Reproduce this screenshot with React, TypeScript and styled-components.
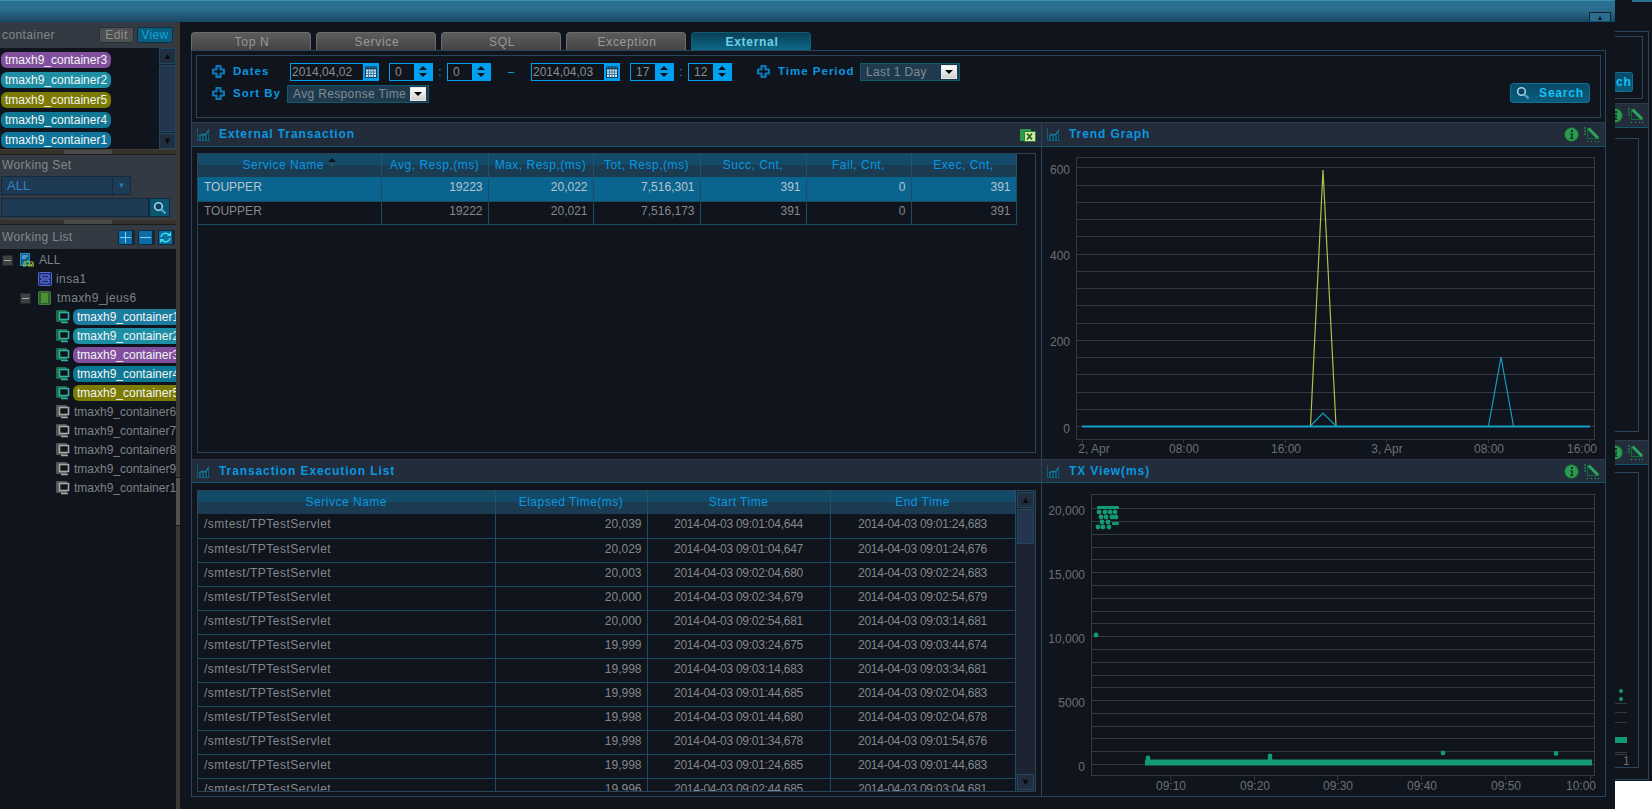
import React from 'react';
import styled, { createGlobalStyle } from 'styled-components';

const GlobalStyle = createGlobalStyle`
    html, body {
        margin: 0;
        padding: 0;
        background: #ffffff;
        overflow: hidden;
    }
    * {
        box-sizing: border-box;
    }
    body, table, input {
        font-family: "Liberation Sans", Arial, sans-serif;
        font-size: 12px;
    }
`

const DARK = '#0f141d';
const LINE = '#2a4559';
const BLUE = '#0a97e0';
const GREY = '#85888b';
const HEAD = '#333a43';

const Page = styled.div`
    display: flex;
    align-items: flex-start;
    width: 1652px;
    height: 809px;
`
const Window = styled.div`
    display: flex;
    flex-direction: column;
    width: 1615px;
    height: 809px;
    background: ${DARK};
`
const TopBar = styled.div`
    display: flex;
    justify-content: flex-end;
    align-items: flex-end;
    flex: 0 0 22px;
    padding-right: 4px;
    background: linear-gradient(#2a6f90 0%, #2b6d8d 45%, #1c4a66 100%);
    border-top: 1px solid #3f8fb3;
    border-bottom: 1px solid #124a68;
`
const CollapseButton = styled.div`
    display: flex;
    justify-content: center;
    align-items: center;
    width: 22px;
    height: 9px;
    background: #2a6d8c;
    border: 1px solid #10222f;
    border-bottom: none;
    color: #0a1016;
    font-size: 7px;
    line-height: 1;
`
const WindowBody = styled.div`
    display: flex;
    flex: 1;
    min-height: 0;
`
const Sidebar = styled.div`
    display: flex;
    flex-direction: column;
    flex: 0 0 176px;
    overflow: hidden;
`
const SideHead = styled.div`
    display: flex;
    align-items: center;
    justify-content: space-between;
    flex: 0 0 ${p => p.$height}px;
    padding: 0 3px 0 2px;
    background: ${HEAD};
    color: ${GREY};
    font-size: 12px;
    letter-spacing: 0.4px;
`
const ModeButtons = styled.div`
    display: flex;
    gap: 3px;
`
const ModeButton = styled.div`
    display: flex;
    justify-content: center;
    align-items: center;
    width: ${p => p.$active ? 36 : 35}px;
    height: 16px;
    border-radius: 2px;
    font-size: 12px;
    background: ${p => p.$active ? '#0a5f80' : '#4d4f50'};
    border: 1px solid ${p => p.$active ? '#0f2f42' : '#25313a'};
    color: ${p => p.$active ? '#12a4e0' : '#8d8f90'};
`
const ContainerBox = styled.div`
    display: flex;
    justify-content: space-between;
    flex: 0 0 101px;
    background: ${DARK};
`
const PillColumn = styled.div`
    display: flex;
    flex-direction: column;
    gap: 4px;
    padding: 4px 0 0 1px;
`
const Pill = styled.div`
    flex: 0 0 16px;
    width: 110px;
    height: 16px;
    padding-left: 4px;
    border-radius: 6px;
    background: ${p => p.$color};
    color: #f2f5f5;
    font-size: 12px;
    line-height: 16px;
    white-space: nowrap;
`
const VScroll = styled.div`
    display: flex;
    flex-direction: column;
    flex: 0 0 17px;
    gap: 1px;
    background: #1b2430;
`
const ScrollArrow = styled.div`
    display: flex;
    justify-content: center;
    align-items: center;
    flex: 0 0 16px;
    background: #202e40;
    border: 1px solid #21465f;
    color: #07090c;
    font-size: 9px;
    line-height: 1;
`
const ScrollThumb = styled.div`
    flex: ${p => p.$height ? `0 0 ${p.$height}px` : 1};
    background: #24364d;
    border: 1px solid #21465f;
`
const ScrollTrack = styled.div`
    flex: 1;
`
const Splitter = styled.div`
    display: flex;
    justify-content: center;
    align-items: center;
    flex: 0 0 ${p => p.$height}px;
    background: #35322e;
    border-top: 1px solid #444038;
    border-bottom: 1px solid #1c1c1c;
`
const Grip = styled.div`
    width: 48px;
    height: 4px;
    background: #4a4a48;
`
const WorkSet = styled.div`
    display: flex;
    flex-direction: column;
    flex: 0 0 64px;
    background: ${HEAD};
    padding: 0 0 0 1px;
`
const WorkSetLabel = styled.div`
    flex: 0 0 21px;
    padding: 3px 0 0 1px;
    color: ${GREY};
    font-size: 12px;
    letter-spacing: 0.4px;
`
const WorkSelect = styled.div`
    display: flex;
    justify-content: space-between;
    width: 130px;
    height: 19px;
    background: #1f3a54;
    border: 1px solid #122a3e;
    color: #2f85c4;
    font-size: 13px;
    line-height: 17px;
    padding-left: 5px;
`
const WorkSelectArrow = styled.div`
    display: flex;
    justify-content: center;
    align-items: center;
    width: 18px;
    border-left: 1px solid #122a3e;
    color: #1b86ad;
    font-size: 8px;
`
const WorkSearch = styled.div`
    display: flex;
    margin-top: 3px;
    width: 169px;
    height: 19px;
`
const WorkInput = styled.div`
    flex: 1;
    background: #1f3a54;
    border: 1px solid #122a3e;
`
const WorkSearchButton = styled.div`
    display: flex;
    justify-content: center;
    align-items: center;
    flex: 0 0 21px;
    background: #0b5570;
    border: 1px solid #122a3e;
`
const ToolButtons = styled.div`
    display: flex;
    gap: 5px;
`
const ToolButton = styled.div`
    display: flex;
    justify-content: center;
    align-items: center;
    width: 15px;
    height: 15px;
    background: #0d6ca6;
    border: 1px solid #0a2b40;
    box-shadow: 2px 0 0 #1c2731;
`
const Tree = styled.div`
    display: flex;
    flex-direction: column;
    flex: 1;
    padding-top: 1.5px;
    background: ${DARK};
    overflow: hidden;
`
const TreeRow = styled.div`
    display: flex;
    align-items: center;
    flex: 0 0 19px;
    padding-left: ${p => p.$indent}px;
    color: #7f8285;
    font-size: 12px;
    letter-spacing: ${p => p.$spaced ? '0.4px' : '0'};
    white-space: nowrap;
`
const Expander = styled.div`
    display: flex;
    justify-content: center;
    align-items: center;
    flex: 0 0 11px;
    height: 11px;
    margin-right: 7px;
    background: #3e4042;
    border: 1px solid #23262a;
`
const ExpanderBar = styled.div`
    width: 7px;
    height: 1px;
    background: #a8a8a8;
`
const TreeIcon = styled.span`
    display: flex;
    flex: 0 0 14px;
    margin-right: ${p => p.$gap}px;
`
const TreePill = styled(Pill)`
    width: 115px;
    flex: 0 0 115px;
`
const TreeLabel = styled.span`
    padding-left: 1px;
`
const Divider = styled.div`
    display: flex;
    flex-direction: column;
    justify-content: center;
    flex: 0 0 4px;
    background: #3b3833;
`
const DividerGrip = styled.div`
    height: 49px;
    margin-top: 172px;
    background: #55524c;
    border-top: 1px solid #151515;
    border-bottom: 1px solid #151515;
`
const Main = styled.div`
    display: flex;
    flex-direction: column;
    flex: 1;
    min-width: 0;
    padding: 10px 9px 12px 11px;
`
const Tabs = styled.div`
    display: flex;
    flex: 0 0 18px;
    gap: 5px;
`
const Tab = styled.div`
    display: flex;
    justify-content: center;
    align-items: center;
    width: 120px;
    height: 18px;
    padding-left: 2px;
    border-radius: 4px 4px 0 0;
    border: 1px solid ${p => p.$active ? '#125c78' : '#6c6c6c'};
    border-bottom: none;
    background: ${p => p.$active ? 'linear-gradient(#0a3f56, #0c6a88)' : 'linear-gradient(#5c5c5c, #444444)'};
    color: ${p => p.$active ? '#6fcfe8' : '#999999'};
    font-weight: ${p => p.$active ? 700 : 400};
    font-size: 12px;
    letter-spacing: 0.7px;
`
const Outer = styled.div`
    display: flex;
    flex-direction: column;
    flex: 1;
    min-height: 0;
    border: 1px solid ${LINE};
`
const FilterPanel = styled.div`
    display: flex;
    justify-content: space-between;
    flex: 0 0 63px;
    margin: 4px;
    border: 1px solid ${LINE};
`
const FilterRows = styled.div`
    display: flex;
    flex-direction: column;
    gap: 3px;
    padding: 6px 0 0 15px;
`
const FilterRow = styled.div`
    display: flex;
    align-items: center;
    height: 19px;
`
const FilterLabel = styled.div`
    display: flex;
    align-items: center;
    gap: 8px;
    width: ${p => p.$width}px;
    margin-left: ${p => p.$left || 0}px;
    margin-top: -1px;
    color: ${BLUE};
    font-weight: 700;
    font-size: 11.5px;
    letter-spacing: 1px;
    white-space: nowrap;
`
const DateField = styled.div`
    display: flex;
    justify-content: space-between;
    width: 89px;
    height: 18px;
    border: 1px solid #00a0f0;
    color: #8a8d90;
    font-size: 12px;
    line-height: 16px;
    padding-left: 1px;
`
const CalendarButton = styled.div`
    display: flex;
    justify-content: center;
    align-items: center;
    flex: 0 0 15px;
    background: #00a0f0;
`
const Spinner = styled.div`
    display: flex;
    justify-content: space-between;
    width: 44px;
    height: 18px;
    margin-left: ${p => p.$left}px;
    border: 1px solid #00a0f0;
    color: #8a8d90;
    line-height: 16px;
    padding-left: 5px;
`
const SpinArrows = styled.div`
    display: flex;
    flex-direction: column;
    justify-content: center;
    align-items: center;
    gap: 3px;
    flex: 0 0 18px;
    background: #00a0f0;
`
const ArrowUp = styled.div`
    width: 0;
    height: 0;
    border-left: 4px solid transparent;
    border-right: 4px solid transparent;
    border-bottom: 4px solid #0a1016;
`
const ArrowDown = styled(ArrowUp)`
    border-bottom: none;
    border-top: 4px solid #0a1016;
`
const FieldSep = styled.div`
    width: ${p => p.$width}px;
    color: #0a97e0;
    text-align: center;
`
const ComboBox = styled.div`
    display: flex;
    justify-content: space-between;
    align-items: center;
    width: ${p => p.$width}px;
    height: 18px;
    padding: 0 2px 0 5px;
    background: #1f3a4d;
    border: 1px solid #0f5a70;
    color: #7f8a92;
    font-size: 12px;
    letter-spacing: 0.35px;
    white-space: nowrap;
`
const ComboArrow = styled.div`
    display: flex;
    justify-content: center;
    align-items: center;
    flex: 0 0 16px;
    height: 14px;
    background: linear-gradient(#ffffff, #cfcfcf);
    border: 1px solid #e8e8e8;
`
const SearchBox = styled.div`
    display: flex;
    align-items: flex-end;
    padding: 0 10px 14px 0;
`
const SearchButton = styled.div`
    display: flex;
    align-items: center;
    justify-content: center;
    gap: 9px;
    width: 80px;
    height: 20px;
    background: linear-gradient(#0a4a66, #0a5c7c);
    border: 1px solid #0f6f94;
    border-radius: 3px;
    color: #18c0f4;
    font-weight: 700;
    font-size: 12px;
    letter-spacing: 0.8px;
`
const Grid = styled.div`
    display: grid;
    flex: 1;
    min-height: 0;
    grid-template-columns: 849px 1fr;
    grid-template-rows: 337px 1fr;
`
const Panel = styled.div`
    display: flex;
    flex-direction: column;
    min-width: 0;
    min-height: 0;
    border-left: ${p => p.$right ? `1px solid ${LINE}` : 'none'};
`
const TitleBar = styled.div`
    display: flex;
    align-items: center;
    flex: 0 0 ${p => p.$height}px;
    padding: 0 5px;
    background: #222c3a;
    border-top: 1px solid #2c3c4c;
    border-bottom: 1px solid #0d566f;
`
const Title = styled.div`
    flex: 1;
    margin: -1px 0 0 9px;
    color: ${BLUE};
    font-weight: 700;
    font-size: 12px;
    letter-spacing: 0.9px;
`
const TitleIcons = styled.div`
    display: flex;
    align-items: center;
    gap: 5px;
`
const TableBox = styled.div`
    display: flex;
    justify-content: space-between;
    height: ${p => p.$height}px;
    margin: ${p => p.$top}px 5px 0 5px;
    border: 1px solid ${LINE};
    overflow: hidden;
`
const DataTable = styled.table`
    table-layout: fixed;
    border-collapse: collapse;
    width: ${p => p.$width}px;
    height: fit-content;
`
const HeadCell = styled.th`
    height: 23px;
    padding: 0 0 2px;
    background: linear-gradient(#134a68 0 48%, #1a3b50 48% 100%);
    border-right: 1px solid #24526e;
    color: #0a97e0;
    font-weight: 400;
    font-size: 12px;
    letter-spacing: 0.5px;
    white-space: nowrap;
`
const Cell = styled.td`
    height: ${p => p.$height}px;
    padding: 0 5px 3px ${p => p.$left ? 6 : 5}px;
    text-align: ${p => p.$align};
    color: ${p => p.$selected ? '#b9c4cc' : '#85888b'};
    background: ${p => p.$selected ? '#0a6490' : 'transparent'};
    border-right: 1px solid #1f4a63;
    border-bottom: 1px solid #1f4a63;
    font-size: 12px;
    letter-spacing: ${p => p.$spacing || 0}px;
    white-space: nowrap;
`
const SortMark = styled.svg`
    margin-left: 4px;
    vertical-align: 2px;
`
const TableScroll = styled(VScroll)`
    flex: 0 0 19px;
    padding: 1px;
`
const ChartSvg = styled.svg`
    display: block;
    flex: 1;
`
const Behind = styled.div`
    display: flex;
    flex-direction: column;
    width: 37px;
    height: 781px;
    background: ${DARK};
    overflow: hidden;
`
const BehindTop = styled.div`
    display: flex;
    justify-content: flex-end;
    flex: 0 0 31px;
    background: ${DARK};
`
const BehindTopStrip = styled.div`
    width: 20px;
    height: 2px;
    background: #2a6f90;
`
const BehindFrame = styled.div`
    display: flex;
    flex-direction: column;
    flex: 0 0 749px;
    width: 34px;
    border-right: 1px solid ${LINE};
    border-top: 1px solid ${LINE};
    border-bottom: 1px solid ${LINE};
`
const BehindFilter = styled.div`
    display: flex;
    align-items: flex-end;
    flex: 0 0 63px;
    width: 28px;
    margin-top: 4px;
    padding-bottom: 6px;
    border-right: 1px solid ${LINE};
    border-top: 1px solid ${LINE};
    border-bottom: 1px solid ${LINE};
`
const BehindSearch = styled.div`
    width: 18px;
    height: 20px;
    padding-left: 1px;
    background: linear-gradient(#0a4a66, #0a5c7c);
    border: 1px solid #0f6f94;
    border-left: none;
    border-radius: 0 3px 3px 0;
    color: #18c0f4;
    font-weight: 700;
    font-size: 12px;
    line-height: 18px;
    letter-spacing: 0.8px;
    white-space: nowrap;
`
const BehindTitle = styled.div`
    display: flex;
    justify-content: flex-end;
    align-items: center;
    gap: 5px;
    flex: 0 0 ${p => p.$height}px;
    margin-top: ${p => p.$top}px;
    padding-right: 4px;
    background: #222c3a;
    border-top: 1px solid #2c3c4c;
    border-bottom: 1px solid #0d566f;
    overflow: hidden;
    & > svg {
        flex: none;
    }
`
const BehindBox = styled.div`
    flex: 0 0 ${p => p.$height}px;
    width: 24px;
    margin-top: ${p => p.$top}px;
    border-right: 1px solid ${LINE};
    border-top: 1px solid ${LINE};
    border-bottom: 1px solid ${LINE};
`
const BehindSvg = styled.svg`
    display: block;
`

const PlusIcon = () => (
    <svg width="13" height="13" viewBox="0 0 13 13">
        <path d="M4.5 1h4v3.5H12v4H8.5V12h-4V8.5H1v-4h3.5z" fill="none" stroke="#0c78b8" strokeWidth="2.2" strokeLinejoin="round" />
    </svg>
);

const CalendarIcon = () => (
    <svg width="12" height="13" viewBox="0 0 12 13">
        <rect x="0.5" y="2" width="11" height="10.5" fill="#d7e6ee" stroke="#0b3f5f" />
        <rect x="1" y="2.5" width="10" height="2" fill="#0b3f5f" />
        <path d="M3 1v2M6 1v2M9 1v2" stroke="#0b3f5f" />
        <path d="M1 7h10M1 9.5h10M3.5 5v7M6 5v7M8.5 5v7" stroke="#3f7ea5" strokeWidth="1" />
    </svg>
);

const ComboTriangle = () => (
    <svg width="8" height="4" viewBox="0 0 8 4"><path d="M0 0h8L4 4z" fill="#000" /></svg>
);

const ChartIcon = () => (
    <svg width="13" height="13" viewBox="0 0 13 13">
        <path d="M0.5 0v12.5H13" fill="none" stroke="#0f5f7c" />
        <path d="M2 12V8L5 6L8 7L12 1.5V12z" fill="#0f5d78" />
        <path d="M2 8L5 6L8 7L12 1.5" fill="none" stroke="#15849f" />
        <path d="M4.5 8v4M7.5 8v4M10.5 6v6" stroke="#0f141d" strokeWidth="0.8" />
    </svg>
);

const ExcelIcon = () => (
    <svg width="16" height="14" viewBox="0 0 16 14">
        <rect x="0" y="1" width="11" height="12" rx="1" fill="#2c9a4c" />
        <rect x="4.5" y="3.5" width="11" height="10" fill="#d9e89a" stroke="#2c7c3c" />
        <path d="M7 5.5l5 6M12 5.5l-5 6" stroke="#176a2a" strokeWidth="1.8" />
    </svg>
);

const InfoIcon = () => (
    <svg width="15" height="15" viewBox="0 0 15 15">
        <circle cx="7.5" cy="7.5" r="7" fill="#2b9a52" stroke="#14532d" />
        <path d="M7 3h2v2H7zM6 6.5h3L8.4 11H9.5v1H6v-1h1l.5-3.5H6z" fill="#10301c" />
    </svg>
);

const ZoomIcon = () => (
    <svg width="16" height="15" viewBox="0 0 16 15">
        <path d="M3.5 1v10.5H15" fill="none" stroke="#0f6a34" />
        <path d="M4.5 1.5L14 11" stroke="#2ba45c" strokeWidth="3" />
        <path d="M0 1h2M0 4h2M0 7h2M3 14.5h1M7 14.5h1M11 14.5h1M14 14.5h1" stroke="#2ba45c" />
    </svg>
);

const LensIcon = ({ size = 14 }: { size?: number }) => (
    <svg width={size} height={size} viewBox="0 0 14 14">
        <circle cx="5.5" cy="5.5" r="3.8" fill="#0d3f58" stroke="#9fd6ee" strokeWidth="1.6" />
        <path d="M8.5 8.5l4 4" stroke="#4aa2d0" strokeWidth="2.4" />
    </svg>
);

const ServerGroupIcon = () => (
    <svg width="14" height="14" viewBox="0 0 14 14">
        <rect x="0.5" y="0.5" width="9" height="12" fill="#0f5f90" stroke="#1f8ac4" />
        <path d="M2 3h6M2 5h4" stroke="#9ad0ec" />
        <path d="M8 7v2M4 11V9h9v2M4 11h2v2H3zM9 11h2v2H8zM12 11h2v2h-3z" fill="none" stroke="#9cc23a" />
    </svg>
);

const InstanceIcon = () => (
    <svg width="14" height="14" viewBox="0 0 14 14">
        <rect x="0.5" y="0.5" width="13" height="13" rx="1" fill="#1c2a70" stroke="#5567d8" />
        <path d="M3 3h8v3H3zM3 8h8v3H3z" fill="none" stroke="#6f82ea" />
    </svg>
);

const JeusIcon = () => (
    <svg width="14" height="14" viewBox="0 0 14 14">
        <rect x="0.5" y="0.5" width="12" height="13" rx="1" fill="#2f5f30" stroke="#437a42" />
        <path d="M3 3h7M3 5h7M3 7h7M3 9h7M3 11h7" stroke="#6fc23a" />
    </svg>
);

const ContainerIcon = ({ on }: { on: boolean }) => (
    <svg width="14" height="14" viewBox="0 0 14 14">
        <rect x="0" y="0" width="11" height="12" rx="1" fill={on ? '#1f6a48' : '#555555'} />
        <rect x="3.5" y="2.5" width="9" height="7" fill="#10151c" stroke={on ? '#2fb0a2' : '#a8a8a8'} strokeWidth="1.6" />
        <path d="M5 12.5h7" stroke={on ? '#2fb0a2' : '#a8a8a8'} strokeWidth="1.5" />
    </svg>
);

const GRID_STROKE = '#34393f';
const AXIS_TEXT = '#6d7073';

const TrendChart = () => {
    const lines = [167, 185, 202, 219, 236, 254, 271, 288, 305, 323, 340, 357, 374, 392, 409, 426];
    const ticks = [1082, 1183, 1285, 1386, 1488, 1589];
    const xLabels: [string, number][] = [['2, Apr', 1094], ['08:00', 1184], ['16:00', 1286], ['3, Apr', 1387], ['08:00', 1489], ['16:00', 1582]];
    const yLabels: [string, number][] = [['600', 174], ['400', 260], ['200', 346], ['0', 433]];
    return (
        <ChartSvg viewBox="1042 147 563 312" preserveAspectRatio="none">
            <rect x="1076.5" y="157.5" width="518" height="282" fill="none" stroke={GRID_STROKE} />
            {lines.map(y => <line key={y} x1="1076" x2="1595" y1={y + 0.5} y2={y + 0.5} stroke={GRID_STROKE} />)}
            {ticks.map(x => <line key={x} x1={x + 0.5} x2={x + 0.5} y1="439" y2="443" stroke={GRID_STROKE} />)}
            {yLabels.map(([t, y]) => <text key={t} x="1070" y={y} textAnchor="end" fill={AXIS_TEXT} fontSize="12">{t}</text>)}
            {xLabels.map(([t, x], i) => <text key={i} x={x} y="453" textAnchor="middle" fill={AXIS_TEXT} fontSize="12">{t}</text>)}
            <polyline points="1310.5,426 1323,170 1336,426" fill="none" stroke="#b7bd4a" strokeWidth="1.2" />
            <polyline points="1310.5,426 1323,413 1336,426" fill="none" stroke="#16a0c0" strokeWidth="1.2" />
            <polyline points="1488.5,426 1501,357 1513.5,426" fill="none" stroke="#16a0c0" strokeWidth="1.2" />
            <line x1="1082" x2="1590" y1="426.5" y2="426.5" stroke="#16a0c8" strokeWidth="2" />
        </ChartSvg>
    );
};

const TxChart = () => {
    const lines = [508, 521, 534, 547, 559, 572, 585, 598, 611, 623, 636, 649, 662, 675, 687, 700, 713, 726, 738, 751, 764];
    const ticks = [1170, 1254, 1337, 1421, 1505, 1590];
    const xLabels: [string, number][] = [['09:10', 1171], ['09:20', 1255], ['09:30', 1338], ['09:40', 1422], ['09:50', 1506], ['10:00', 1581]];
    const yLabels: [string, number][] = [['20,000', 515], ['15,000', 579], ['10,000', 643], ['5000', 707], ['0', 771]];
    const dots = [
        [1099, 512], [1105, 512], [1110, 512], [1115, 512],
        [1101, 517], [1106, 517], [1112, 517], [1116, 517],
        [1102, 522], [1108, 522], [1098, 527], [1103, 527], [1109, 527],
        [1096, 635], [1443, 753], [1556, 753.5], [1148, 758], [1270, 756], [1270, 759],
    ];
    return (
        <ChartSvg viewBox="1042 483 563 313" preserveAspectRatio="none">
            <rect x="1091.5" y="494.5" width="503" height="281" fill="none" stroke={GRID_STROKE} />
            {lines.map(y => <line key={y} x1="1091" x2="1595" y1={y + 0.5} y2={y + 0.5} stroke={GRID_STROKE} />)}
            {ticks.map(x => <line key={x} x1={x + 0.5} x2={x + 0.5} y1="776" y2="780" stroke={GRID_STROKE} />)}
            {yLabels.map(([t, y]) => <text key={t} x="1085" y={y} textAnchor="end" fill={AXIS_TEXT} fontSize="12">{t}</text>)}
            {xLabels.map(([t, x]) => <text key={t} x={x} y="790" textAnchor="middle" fill={AXIS_TEXT} fontSize="12">{t}</text>)}
            <rect x="1097" y="506" width="22" height="3" rx="1" fill="#149a72" />
            <rect x="1112" y="522" width="7" height="3" rx="1" fill="#149a72" />
            <rect x="1145" y="759.5" width="447" height="6" fill="#149a72" />
            {dots.map(([x, y], i) => <circle key={i} cx={x} cy={y} r="2.4" fill="#149a72" />)}
        </ChartSvg>
    );
};

const listPills = [
    { name: 'tmaxh9_container3', color: '#824f9e' },
    { name: 'tmaxh9_container2', color: '#1d8ea4' },
    { name: 'tmaxh9_container5', color: '#7c7a00' },
    { name: 'tmaxh9_container4', color: '#0e7894' },
    { name: 'tmaxh9_container1', color: '#10759c' },
];

const treeContainers = [
    { name: 'tmaxh9_container1', color: '#1d7d9f' },
    { name: 'tmaxh9_container2', color: '#1d8ea4' },
    { name: 'tmaxh9_container3', color: '#824f9e' },
    { name: 'tmaxh9_container4', color: '#0e7894' },
    { name: 'tmaxh9_container5', color: '#7c7a00' },
    { name: 'tmaxh9_container6' },
    { name: 'tmaxh9_container7' },
    { name: 'tmaxh9_container8' },
    { name: 'tmaxh9_container9' },
    { name: 'tmaxh9_container10' },
];

const externalHeaders = ['Service Name', 'Avg, Resp,(ms)', 'Max, Resp,(ms)', 'Tot, Resp,(ms)', 'Succ, Cnt,', 'Fail, Cnt,', 'Exec, Cnt,'];
const externalWidths = [183, 107, 105, 107, 106, 105, 105];
const externalRows = [
    ['TOUPPER', '19223', '20,022', '7,516,301', '391', '0', '391'],
    ['TOUPPER', '19222', '20,021', '7,516,173', '391', '0', '391'],
];

const execHeaders = ['Serivce Name', 'Elapsed Time(ms)', 'Start Time', 'End Time'];
const execWidths = [297, 152, 183, 185];
const execRows = [
    ['20,039', '09:01:04,644', '09:01:24,683'],
    ['20,029', '09:01:04,647', '09:01:24,676'],
    ['20,003', '09:02:04,680', '09:02:24,683'],
    ['20,000', '09:02:34,679', '09:02:54,679'],
    ['20,000', '09:02:54,681', '09:03:14,681'],
    ['19,999', '09:03:24,675', '09:03:44,674'],
    ['19,998', '09:03:14,683', '09:03:34,681'],
    ['19,998', '09:01:44,685', '09:02:04,683'],
    ['19,998', '09:01:44,680', '09:02:04,678'],
    ['19,998', '09:01:34,678', '09:01:54,676'],
    ['19,998', '09:01:24,685', '09:01:44,683'],
    ['19,996', '09:02:44,685', '09:03:04,681'],
];

const Spin = ({ value, left }: { value: string; left: number }) => (
    <Spinner $left={left}>
        {value}
        <SpinArrows><ArrowUp /><ArrowDown /></SpinArrows>
    </Spinner>
);

const App: React.FC = () => {
    return (
        <Page>
            <GlobalStyle />
            <Window>
                <TopBar><CollapseButton>▲</CollapseButton></TopBar>
                <WindowBody>
                    <Sidebar>
                        <SideHead $height={26}>
                            container
                            <ModeButtons>
                                <ModeButton>Edit</ModeButton>
                                <ModeButton $active>View</ModeButton>
                            </ModeButtons>
                        </SideHead>
                        <ContainerBox>
                            <PillColumn>
                                {listPills.map(p => <Pill key={p.name} $color={p.color}>{p.name}</Pill>)}
                            </PillColumn>
                            <VScroll>
                                <ScrollArrow>▲</ScrollArrow>
                                <ScrollThumb />
                                <ScrollArrow>▼</ScrollArrow>
                            </VScroll>
                        </ContainerBox>
                        <Splitter $height={5}><Grip /></Splitter>
                        <WorkSet>
                            <WorkSetLabel>Working Set</WorkSetLabel>
                            <WorkSelect>
                                ALL
                                <WorkSelectArrow>▼</WorkSelectArrow>
                            </WorkSelect>
                            <WorkSearch>
                                <WorkInput />
                                <WorkSearchButton><LensIcon /></WorkSearchButton>
                            </WorkSearch>
                        </WorkSet>
                        <Splitter $height={6}><Grip /></Splitter>
                        <SideHead $height={24}>
                            Working List
                            <ToolButtons>
                                <ToolButton>
                                    <svg width="11" height="11" viewBox="0 0 11 11"><path d="M5.5 0v11M0 5.5h11" stroke="#7fd0f4" /></svg>
                                </ToolButton>
                                <ToolButton>
                                    <svg width="11" height="11" viewBox="0 0 11 11"><path d="M0 5.5h11" stroke="#7fd0f4" /></svg>
                                </ToolButton>
                                <ToolButton>
                                    <svg width="11" height="11" viewBox="0 0 11 11"><path d="M1 5a4.5 4.5 0 0 1 8-2M10 6a4.5 4.5 0 0 1-8 2" fill="none" stroke="#39e0e0" strokeWidth="1.5" /><path d="M7 4h4V0zM4 7H0v4z" fill="#39e0e0" /></svg>
                                </ToolButton>
                            </ToolButtons>
                        </SideHead>
                        <Tree>
                            <TreeRow $indent={2}>
                                <Expander><ExpanderBar /></Expander>
                                <TreeIcon $gap={5}><ServerGroupIcon /></TreeIcon>
                                ALL
                            </TreeRow>
                            <TreeRow $indent={38} $spaced>
                                <TreeIcon $gap={4}><InstanceIcon /></TreeIcon>
                                insa1
                            </TreeRow>
                            <TreeRow $indent={20} $spaced>
                                <Expander><ExpanderBar /></Expander>
                                <TreeIcon $gap={5}><JeusIcon /></TreeIcon>
                                tmaxh9_jeus6
                            </TreeRow>
                            {treeContainers.map(c => (
                                <TreeRow key={c.name} $indent={56}>
                                    <TreeIcon $gap={3}><ContainerIcon on={!!c.color} /></TreeIcon>
                                    {c.color ? <TreePill $color={c.color}>{c.name}</TreePill> : <TreeLabel>{c.name}</TreeLabel>}
                                </TreeRow>
                            ))}
                        </Tree>
                    </Sidebar>
                    <Divider><DividerGrip /></Divider>
                    <Main>
                        <Tabs>
                            <Tab>Top N</Tab>
                            <Tab>Service</Tab>
                            <Tab>SQL</Tab>
                            <Tab>Exception</Tab>
                            <Tab $active>External</Tab>
                        </Tabs>
                        <Outer>
                            <FilterPanel>
                                <FilterRows>
                                    <FilterRow>
                                        <FilterLabel $width={78}><PlusIcon />Dates</FilterLabel>
                                        <DateField>2014,04,02<CalendarButton><CalendarIcon /></CalendarButton></DateField>
                                        <Spin value="0" left={10} />
                                        <FieldSep $width={14}>:</FieldSep>
                                        <Spin value="0" left={0} />
                                        <FieldSep $width={40}>–</FieldSep>
                                        <DateField>2014,04,03<CalendarButton><CalendarIcon /></CalendarButton></DateField>
                                        <Spin value="17" left={10} />
                                        <FieldSep $width={14}>:</FieldSep>
                                        <Spin value="12" left={0} />
                                        <FilterLabel $width={103} $left={25}><PlusIcon />Time Period</FilterLabel>
                                        <ComboBox $width={100}>Last 1 Day<ComboArrow><ComboTriangle /></ComboArrow></ComboBox>
                                    </FilterRow>
                                    <FilterRow>
                                        <FilterLabel $width={75}><PlusIcon />Sort By</FilterLabel>
                                        <ComboBox $width={142}>Avg Response Time<ComboArrow><ComboTriangle /></ComboArrow></ComboBox>
                                    </FilterRow>
                                </FilterRows>
                                <SearchBox>
                                    <SearchButton><LensIcon />Search</SearchButton>
                                </SearchBox>
                            </FilterPanel>
                            <Grid>
                                <Panel>
                                    <TitleBar $height={25}>
                                        <ChartIcon />
                                        <Title>External Transaction</Title>
                                        <TitleIcons><ExcelIcon /></TitleIcons>
                                    </TitleBar>
                                    <TableBox $height={300} $top={6}>
                                        <DataTable $width={818}>
                                            <colgroup>{externalWidths.map((w, i) => <col key={i} width={w} />)}</colgroup>
                                            <thead>
                                                <tr>
                                                    {externalHeaders.map((h, i) => (
                                                        <HeadCell key={h}>
                                                            {h}
                                                            {i === 0 && (
                                                                <SortMark width="8" height="9" viewBox="0 0 8 9">
                                                                    <path d="M4 0l4 4H0z" fill="#0a1016" />
                                                                    <path d="M4 9L0 5h8z" fill="#2a4a5e" />
                                                                </SortMark>
                                                            )}
                                                        </HeadCell>
                                                    ))}
                                                </tr>
                                            </thead>
                                            <tbody>
                                                {externalRows.map((row, r) => (
                                                    <tr key={r}>
                                                        {row.map((v, i) => (
                                                            <Cell key={i} $height={r === 0 ? 24 : 23} $align={i === 0 ? 'left' : 'right'} $left={i === 0} $selected={r === 0}>{v}</Cell>
                                                        ))}
                                                    </tr>
                                                ))}
                                            </tbody>
                                        </DataTable>
                                    </TableBox>
                                </Panel>
                                <Panel $right>
                                    <TitleBar $height={25}>
                                        <ChartIcon />
                                        <Title>Trend Graph</Title>
                                        <TitleIcons><InfoIcon /><ZoomIcon /></TitleIcons>
                                    </TitleBar>
                                    <TrendChart />
                                </Panel>
                                <Panel>
                                    <TitleBar $height={24}>
                                        <ChartIcon />
                                        <Title>Transaction Execution List</Title>
                                    </TitleBar>
                                    <TableBox $height={302} $top={7}>
                                        <DataTable $width={817}>
                                            <colgroup>{execWidths.map((w, i) => <col key={i} width={w} />)}</colgroup>
                                            <thead>
                                                <tr>{execHeaders.map(h => <HeadCell key={h}>{h}</HeadCell>)}</tr>
                                            </thead>
                                            <tbody>
                                                {execRows.map((row, r) => (
                                                    <tr key={r}>
                                                        <Cell $height={24} $align="left" $left $spacing={0.5}>/smtest/TPTestServlet</Cell>
                                                        <Cell $height={24} $align="right">{row[0]}</Cell>
                                                        <Cell $height={24} $align="center" $spacing={-0.25}>2014-04-03 {row[1]}</Cell>
                                                        <Cell $height={24} $align="center" $spacing={-0.25}>2014-04-03 {row[2]}</Cell>
                                                    </tr>
                                                ))}
                                            </tbody>
                                        </DataTable>
                                        <TableScroll>
                                            <ScrollArrow>▲</ScrollArrow>
                                            <ScrollThumb $height={35} />
                                            <ScrollTrack />
                                            <ScrollArrow>▼</ScrollArrow>
                                        </TableScroll>
                                    </TableBox>
                                </Panel>
                                <Panel $right>
                                    <TitleBar $height={24}>
                                        <ChartIcon />
                                        <Title>TX View(ms)</Title>
                                        <TitleIcons><InfoIcon /><ZoomIcon /></TitleIcons>
                                    </TitleBar>
                                    <TxChart />
                                </Panel>
                            </Grid>
                        </Outer>
                    </Main>
                </WindowBody>
            </Window>
            <Behind>
                <BehindTop><BehindTopStrip /></BehindTop>
                <BehindFrame>
                    <BehindFilter><BehindSearch>ch</BehindSearch></BehindFilter>
                    <BehindTitle $height={25} $top={4}><InfoIcon /><ZoomIcon /></BehindTitle>
                    <BehindBox $height={294} $top={10} />
                    <BehindTitle $height={25} $top={8}><InfoIcon /><ZoomIcon /></BehindTitle>
                    <BehindBox $height={296} $top={7}>
                        <BehindSvg width="14" height="294" viewBox="0 0 14 294">
                            <circle cx="6" cy="218" r="2" fill="#149a72" />
                            <circle cx="6" cy="226" r="2" fill="#149a72" />
                            {[230, 239, 249, 279, 281].map(y => <line key={y} x1="0" x2="12" y1={y + 0.5} y2={y + 0.5} stroke={GRID_STROKE} />)}
                            <rect x="0" y="264" width="12" height="6" fill="#149a72" />
                            <text x="8" y="292" fill={AXIS_TEXT} fontSize="12">1</text>
                        </BehindSvg>
                    </BehindBox>
                </BehindFrame>
            </Behind>
        </Page>
    );
}

export default App;
